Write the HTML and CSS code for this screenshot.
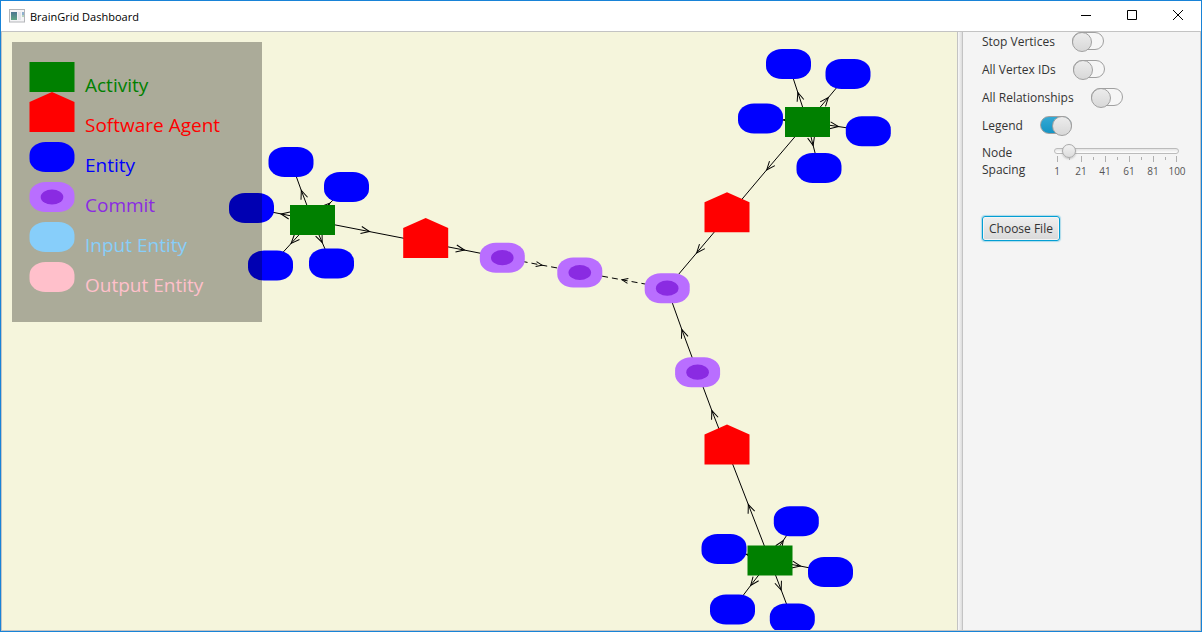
FILE: index.html
```html
<!DOCTYPE html>
<html lang="en">
<head>
<meta charset="utf-8">
<title>BrainGrid Dashboard</title>
<link rel="stylesheet" href="styles.css">
</head>
<body>
<div class="window">
  <header class="titlebar">
    <svg class="app-icon" width="16" height="14" viewBox="0 0 16 14" aria-hidden="true">
      <defs>
        <linearGradient id="pane" x1="0" y1="0" x2="0" y2="1"><stop offset="0" stop-color="#4a7590"/><stop offset="1" stop-color="#5fa585"/></linearGradient>
      </defs>
      <rect x=".5" y=".5" width="15" height="12.5" fill="#f4f4f6" stroke="#b4b6ba"/>
      <rect x="2" y="3" width="6" height="8" fill="url(#pane)"/>
      <rect x="9" y="3" width="3" height="8" fill="#e2e4ea"/>
      <rect x="13" y="3" width="2" height="3" fill="#8fb0cf"/>
      <rect x="13" y="6" width="2" height="2" fill="#b5d3bd"/>
    </svg>
    <h1 class="title">BrainGrid Dashboard</h1>
    <div class="window-buttons">
      <button class="window-button" type="button" aria-label="Minimize"><svg width="10" height="10"><path d="M0 5.5H10"/></svg></button>
      <button class="window-button" type="button" aria-label="Maximize"><svg width="10" height="10"><path d="M.5 .5H9.5V9.5H.5Z"/></svg></button>
      <button class="window-button" type="button" aria-label="Close"><svg width="10" height="10"><path d="M0 0L10 10M10 0L0 10"/></svg></button>
    </div>
  </header>

  <main class="content">
    <section class="canvas" aria-label="Provenance graph">
      <svg class="graph" aria-hidden="true">
        <defs>
          <marker id="arrow" markerUnits="userSpaceOnUse" markerWidth="24" markerHeight="24" viewBox="-12 -12 24 24" orient="auto" overflow="visible"><path d="M-8 -3.5L0.500 0L-8 3.5" fill="none" stroke="#000"/></marker>
          <marker id="arrow-small" markerUnits="userSpaceOnUse" markerWidth="24" markerHeight="24" viewBox="-12 -12 24 24" orient="auto" overflow="visible"><path d="M-5 -2.5L1 0L-5 2.5" fill="none" stroke="#000"/></marker>
          <rect id="activity" x="-22.5" y="-15" width="45" height="30" fill="#008000"/>
          <path id="agent" d="M-22.5 15V-15L0 -25L22.5 -15V15Z" fill="#f00"/>
          <rect id="node" x="-22.5" y="-15" width="45" height="30" rx="16" ry="13"/>
          <g id="commit"><use href="#node" fill="#b96eff"/><ellipse rx="11.3" ry="7.6" fill="#8a2be2"/></g>
        </defs>
        <g transform="translate(-2 -32)">
          <g class="edges">
            <path d="M312.5 220L301.5 191L291 162"/>
            <path d="M312.5 220L329.5 203.5L346.5 187"/>
            <path d="M312.5 220L281.5 214L251.5 208"/>
            <path d="M312.5 220L291.5 243L270.5 266"/>
            <path d="M312.5 220L322 242L331.5 264"/>
            <path d="M312.5 220.5L369 231.5L425.5 242.5"/>
            <path d="M425.5 242.5L464 250L502 257.5"/>
            <path d="M807.5 122L798 93L788.5 64"/>
            <path d="M807.5 122L828 98L848 74"/>
            <path d="M807.5 122L784 120L760.5 118"/>
            <path d="M807.5 122L838 126.5L868 131"/>
            <path d="M807.5 122L813 145L819 168"/>
            <path d="M807.5 122L767 169.5L727 217"/>
            <path d="M727 217L697 252.5L667 288"/>
            <path d="M697.5 372L682 330L667 288"/>
            <path d="M727 449.5L712 411L697.5 372"/>
            <path d="M770 560.5L748.5 505L727 449.5"/>
            <path d="M770 560.5L783 541L796 521"/>
            <path d="M770 560.5L747 554.5L724 548.5"/>
            <path d="M770 560.5L800 566L830.5 572"/>
            <path d="M770 560.5L751 585L732.5 609.5"/>
            <path d="M770 560.5L781 589.5L792 618.5"/>
          </g>
          <g class="edges edges-dashed">
            <path d="M502 257.5L541 265L579.5 272"/>
            <path d="M667 288L623 280L579.5 272"/>
          </g>
          <g fill="#00f">
            <use href="#node" x="291" y="162"/><use href="#node" x="346.5" y="187"/><use href="#node" x="251.5" y="208"/><use href="#node" x="270.5" y="265.5"/><use href="#node" x="331.5" y="263.5"/>
            <use href="#node" x="788.5" y="64"/><use href="#node" x="848" y="74"/><use href="#node" x="760.5" y="118.5"/><use href="#node" x="868.3" y="131.3"/><use href="#node" x="819" y="168"/>
            <use href="#node" x="796.3" y="521.2"/><use href="#node" x="724" y="549"/><use href="#node" x="830.5" y="572"/><use href="#node" x="732.5" y="609.5"/><use href="#node" x="792.3" y="618.5"/>
          </g>
          <use href="#activity" x="312.5" y="220"/><use href="#activity" x="807.5" y="122"/><use href="#activity" x="770" y="560.5"/>
          <use href="#agent" x="425.7" y="243"/><use href="#agent" x="727" y="217.3"/><use href="#agent" x="727" y="449.5"/>
          <use href="#commit" x="502.3" y="257.7"/><use href="#commit" x="579.8" y="272.5"/><use href="#commit" x="667.2" y="288.2"/><use href="#commit" x="697.6" y="372.2"/>
        </g>
      </svg>

      <ul class="legend">
        <li class="legend-item activity"><svg class="legend-icon" viewBox="-23 -15 45 30"><use href="#activity"/></svg>Activity</li>
        <li class="legend-item agent"><svg class="legend-icon" viewBox="-23 -15 45 30"><use href="#agent"/></svg>Software Agent</li>
        <li class="legend-item entity"><svg class="legend-icon" viewBox="-23 -15 45 30"><use href="#node"/></svg>Entity</li>
        <li class="legend-item commit"><svg class="legend-icon" viewBox="-23 -15 45 30"><use href="#commit"/></svg>Commit</li>
        <li class="legend-item input-entity"><svg class="legend-icon" viewBox="-23 -15 45 30"><use href="#node"/></svg>Input Entity</li>
        <li class="legend-item output-entity"><svg class="legend-icon" viewBox="-23 -15 45 30"><use href="#node"/></svg>Output Entity</li>
      </ul>
    </section>

    <div class="divider" role="separator"></div>

    <aside class="sidebar">
      <div class="switches">
        <label class="switch-row">Stop Vertices<input class="switch" type="checkbox"></label>
        <label class="switch-row">All Vertex IDs<input class="switch" type="checkbox"></label>
        <label class="switch-row">All Relationships<input class="switch" type="checkbox"></label>
        <label class="switch-row">Legend<input class="switch" type="checkbox" checked></label>
      </div>
      <div class="spacing-row">
        <label class="spacing-label" for="spacing">Node Spacing</label>
        <div class="slider">
          <input class="slider-input" id="spacing" type="range" min="1" max="100" value="7">
          <svg class="ticks" width="125" height="6" aria-hidden="true"><path d="M3.5 0V6M27.5 0V6M51.5 0V6M75.5 0V6M99.5 0V6M122.5 0V6M15.5 1V4M39.5 1V4M63.5 1V4M87.5 1V4M111.5 1V4"/></svg>
          <div class="tick-labels"><span>1</span><span>21</span><span>41</span><span>61</span><span>81</span><span>100</span></div>
        </div>
      </div>
      <button class="file-button" type="button">Choose File</button>
    </aside>
  </main>
</div>
</body>
</html>
```
FILE: styles.css
```css
* {
  box-sizing: border-box;
}

body {
  margin: 0;
  font-family: "Open Sans", "Noto Sans", sans-serif;
  font-size: 12px;
  color: #333;
}

.window {
  display: flex;
  flex-direction: column;
  height: 100vh;
  border: 1px solid #1883d7;
  background: #fff;
}

.titlebar {
  display: flex;
  align-items: center;
  flex: none;
  height: 30px;
  padding-left: 8px;
}

.app-icon {
  margin-right: 5px;
}

.title {
  flex: 1;
  margin: 0;
  font-size: 11px;
  font-weight: 400;
  color: #000;
}

.window-buttons {
  display: flex;
}

.window-button {
  display: grid;
  place-items: center;
  width: 46px;
  height: 30px;
  padding: 0 0 2px;
  border: 0;
  background: none;
}

.window-button path {
  fill: none;
  stroke: #000;
}

.content {
  display: flex;
  flex: 1;
  min-height: 0;
  border: 1px solid #c3c3c3;
}

.canvas {
  position: relative;
  flex: 1;
  overflow: hidden;
  background: #f5f5dc;
}

.graph {
  display: block;
  width: 100%;
  height: 100%;
}

.edges {
  fill: none;
  stroke: #000;
  marker-mid: url(#arrow);
}

.edges-dashed {
  stroke-dasharray: 6 4;
  marker-mid: url(#arrow-small);
}

.legend {
  position: absolute;
  top: 10px;
  left: 10px;
  display: grid;
  gap: 10px;
  width: 250px;
  margin: 0;
  padding: 20px 17px 30px;
  list-style: none;
  background: rgba(0, 0, 0, 0.3);
}

.legend-item {
  display: flex;
  gap: 11px;
  height: 30px;
  font-size: 19px;
  line-height: 47px;
}

.legend-icon {
  flex: none;
  width: 45px;
  height: 30px;
  overflow: visible;
  fill: currentColor;
}

.activity { color: #008000; }
.agent { color: #f00; }
.entity { color: #00f; }
.commit { color: #8a2be2; }
.input-entity { color: #87cefa; }
.output-entity { color: #ffc0cb; }

.divider {
  flex: none;
  width: 6px;
  border: solid #c3c3c3;
  border-width: 0 1px;
  background: linear-gradient(to right, #f8f8f8, #dcdcdc);
}

.sidebar {
  flex: none;
  width: 237px;
  padding-left: 19px;
  background: #f4f4f4;
}

.switches {
  display: grid;
  gap: 10px;
}

.switch-row {
  display: flex;
  gap: 17px;
  align-items: center;
  height: 18px;
}

.switch {
  appearance: none;
  display: flex;
  width: 32px;
  height: 18px;
  margin: 0;
  border: 1px solid #a0a0a0;
  border-radius: 9px;
  background: #f6f6f6;
}

.switch::before {
  content: "";
  width: 18px;
  height: 18px;
  margin: -1px;
  border: 1px solid #a0a0a0;
  border-radius: 50%;
  background: linear-gradient(#ececec, #d8d8d8);
}

.switch:checked {
  justify-content: flex-end;
  background: linear-gradient(#35a9d4, #1594c4);
}

.spacing-row {
  display: flex;
  gap: 12px;
  margin-top: 10px;
}

.spacing-label {
  width: 60px;
  line-height: 17px;
}

.slider {
  width: 125px;
}

.slider-input {
  appearance: none;
  display: block;
  width: 100%;
  height: 14px;
  margin: 0;
  background: none;
}

.slider-input::-webkit-slider-runnable-track {
  height: 6px;
  border: 1px solid #bbb;
  border-radius: 3px;
  background: linear-gradient(#e4e4e4, #fff);
}

.slider-input::-webkit-slider-thumb {
  appearance: none;
  width: 14px;
  height: 14px;
  margin-top: -5px;
  border: 1px solid #aaa;
  border-radius: 50%;
  background: linear-gradient(#f2f2f2, #dcdcdc);
  box-shadow: 0 1px 2px rgba(0, 0, 0, 0.2);
}

.ticks {
  display: block;
  margin-top: -2px;
  stroke: #b0b0b0;
}

.tick-labels {
  display: flex;
  margin: 2px -10px 0 -9px;
  font-size: 10px;
  line-height: 14px;
  color: #555;
}

.tick-labels span {
  flex: 1;
  text-align: center;
}

.file-button {
  display: block;
  height: 25px;
  margin-top: 38px;
  padding: 0 6px;
  border: 1px solid #039ed3;
  border-radius: 3px;
  background: linear-gradient(#efefef, #d9d9d9);
  box-shadow: 0 0 1px 1px rgba(3, 158, 211, 0.3), inset 0 0 0 1px #f5f5f5;
  font: inherit;
  color: inherit;
}
```
